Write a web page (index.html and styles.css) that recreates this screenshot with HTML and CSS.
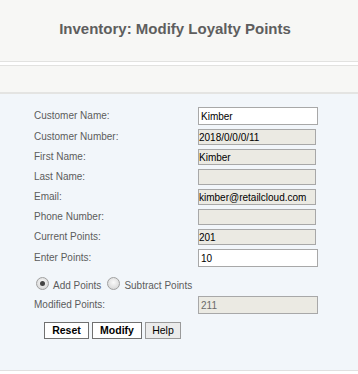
FILE: index.html
```html
<!DOCTYPE html>
<html>
<head>
<meta charset="utf-8">
<link rel="stylesheet" href="styles.css">
</head>
<body>
<div class="header">
  <h1 class="title">Inventory: Modify Loyalty Points</h1>
</div>
<div class="subbar"></div>
<div class="panel">
  <div class="form">
    <label class="lbl">Customer Name:</label>
    <div class="field edit">Kimber</div>
    <label class="lbl">Customer Number:</label>
    <div class="field ro">2018/0/0/0/11</div>
    <label class="lbl">First Name:</label>
    <div class="field ro">Kimber</div>
    <label class="lbl">Last Name:</label>
    <div class="field ro"></div>
    <label class="lbl">Email:</label>
    <div class="field ro">kimber@retailcloud.com</div>
    <label class="lbl">Phone Number:</label>
    <div class="field ro"></div>
    <label class="lbl">Current Points:</label>
    <div class="field ro">201</div>
    <label class="lbl">Enter Points:</label>
    <div class="field edit">10</div>
  </div>
  <div class="radios">
    <span class="radio checked"></span><span class="rlbl">Add Points</span>
    <span class="radio"></span><span class="rlbl">Subtract Points</span>
  </div>
  <div class="form mod">
    <label class="lbl">Modified Points:</label>
    <div class="field dis">211</div>
  </div>
  <div class="buttons">
    <button class="btn strong">Reset</button>
    <button class="btn strong">Modify</button>
    <button class="btn plain">Help</button>
  </div>
</div>
</body>
</html>
```
FILE: styles.css
```css
html, body {
  margin: 0;
  padding: 0;
  background: #ffffff;
}
body {
  width: 358px;
  height: 374px;
  overflow: hidden;
  font-family: "Liberation Sans", Arial, sans-serif;
}
.header {
  height: 61px;
  background: #f7f7f5;
  border-bottom: 1px solid #e2e2e0;
  display: flex;
  align-items: flex-start;
  justify-content: center;
}
.title {
  margin: 20px 0 0 -8px;
  font-size: 15px;
  font-weight: bold;
  color: #5e5e5e;
  line-height: 18px;
}
.subbar {
  margin-top: 3px;
  height: 26px;
  background: #f7f7f5;
  border-top: 1px solid #e2e2e0;
  border-bottom: 2px solid #e4e4e2;
}
.panel {
  background: #f2f6fa;
  height: 277px;
  border-bottom: 1px solid #e0e0e0;
  padding: 13px 0 0 34px;
  box-sizing: border-box;
}
.form {
  display: grid;
  grid-template-columns: 164px auto;
  row-gap: 4px;
  align-items: center;
}
.lbl {
  font-size: 10px;
  color: #5c5c5c;
  line-height: 12px;
}
.field {
  box-sizing: border-box;
  border: 1px solid #a8a8a8;
  font-family: "Liberation Sans", Tahoma, sans-serif;
  font-size: 10px;
  color: #000;
  display: flex;
  align-items: center;
  overflow: hidden;
  white-space: nowrap;
}
.edit {
  width: 120px;
  height: 18px;
  background: #ffffff;
  padding-left: 2px;
}
.ro {
  width: 118px;
  height: 16px;
  background: #ebeae3;
  padding-left: 0;
}
.dis {
  width: 120px;
  height: 18px;
  background: #ebeae3;
  color: #6a6a6a;
  padding-left: 2px;
}
.radios {
  display: flex;
  align-items: center;
  height: 16px;
  margin: 8px 0 0 2px;
}
.radio {
  width: 11px;
  height: 11px;
  border-radius: 50%;
  border: 1px solid #a0a0a0;
  background: radial-gradient(circle at 50% 40%, #fafafa 0%, #dcdcdc 70%, #cfcfcf 100%);
  position: relative;
  flex: none;
}
.radio.checked::after {
  content: "";
  position: absolute;
  left: 3px;
  top: 3px;
  width: 5px;
  height: 5px;
  border-radius: 50%;
  background: #444;
}
.rlbl {
  font-size: 10px;
  color: #5c5c5c;
  margin: 4px 6px 0 4px;
}
.mod {
  margin-top: 5px;
}
.buttons {
  display: flex;
  gap: 3px;
  margin: 8px 0 0 10px;
}
.btn {
  box-sizing: border-box;
  height: 17px;
  padding: 0;
  font-family: "Liberation Sans", Tahoma, sans-serif;
  font-size: 10.5px;
  color: #000;
  line-height: 15px;
}
.strong {
  font-weight: bold;
  background: #ffffff;
  border: 1px solid #707070;
}
.btn:nth-child(1) { width: 45px; }
.btn:nth-child(2) { width: 50px; }
.plain {
  width: 36px;
  background: #ebebeb;
  border: 1px solid #9a9a9a;
}
```
